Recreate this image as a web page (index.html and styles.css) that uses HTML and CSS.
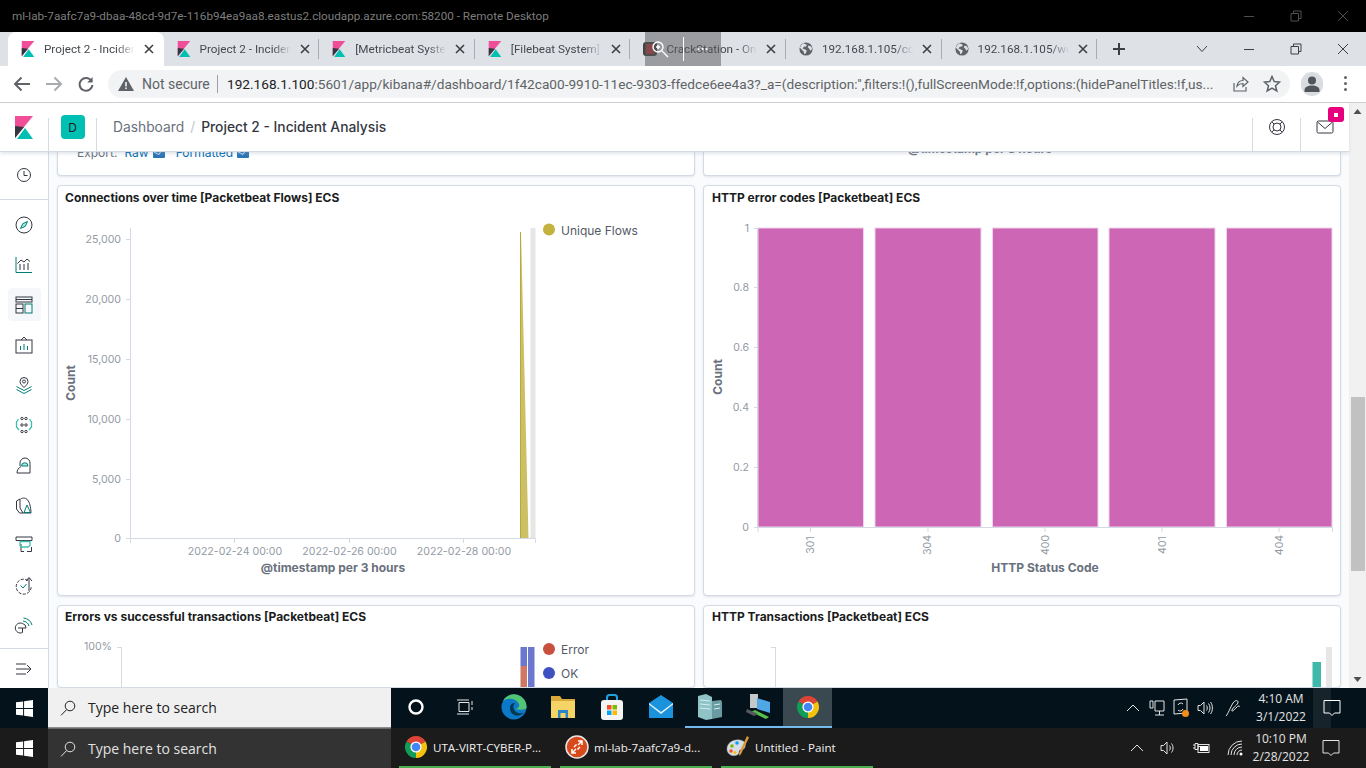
FILE: index.html
```html
<!DOCTYPE html>
<html lang="en">
<head>
<meta charset="utf-8">
<title>Project 2 - Incident Analysis</title>
<link rel="stylesheet" href="styles.css">
</head>
<body>
<svg class="defs" width="0" height="0" aria-hidden="true">
  <symbol id="kib" viewBox="0 0 18 23">
    <polygon class="k-pink" points="0,0 18,0 0,22"/>
    <polygon class="k-dark" points="0,10 9,11 0,22"/>
    <polygon class="k-teal" points="2,23 18,23 10,12"/>
  </symbol>
  <symbol id="globe" viewBox="0 0 16 16">
    <circle class="g-bg" cx="8" cy="8" r="7.5"/>
    <path class="g-land" d="M5 1.5 9 3 8 5 5.5 5.5 4 7.5 7 8.5 9 10 7.5 13 6 14 5.5 11 2.5 8 1 6.5 2.5 3.5zM11 4l3 1 1 3-2 2-1.5-2.5L10 6z"/>
  </symbol>
  <symbol id="chrome" viewBox="0 0 24 24">
    <path class="c-red" d="M12 12 2.47 6.5A11 11 0 0 1 21.53 6.5z"/>
    <path class="c-yel" d="M12 12 21.53 6.5A11 11 0 0 1 12 23z"/>
    <path class="c-grn" d="M12 12 12 23A11 11 0 0 1 2.47 6.5z"/>
    <circle class="c-wht" cx="12" cy="12" r="5.6"/>
    <circle class="c-blu" cx="12" cy="12" r="4.3"/>
  </symbol>
  <symbol id="win" viewBox="0 0 16 16">
    <path class="w-fill" d="M0 2.2 6.7 1.3V7.6H0zM7.6 1.2 16 0V7.6H7.6zM0 8.4H6.7V14.7L0 13.8zM7.6 8.4H16V16L7.6 14.8z"/>
  </symbol>
  <symbol id="mag" viewBox="0 0 16 16">
    <circle class="ln" cx="10" cy="6" r="4.8"/>
    <path class="ln" d="M6.6 9.6 1 15.4"/>
  </symbol>
  <symbol id="notif" viewBox="0 0 18 18">
    <path class="ln" d="M1 1.5H17V14H11.5L9 16.5 6.5 14H1z"/>
  </symbol>
  <symbol id="up" viewBox="0 0 14 8">
    <path class="ln" d="M1 7 7 1l6 6"/>
  </symbol>
  <symbol id="dl" viewBox="0 0 12 9">
    <rect class="dlic" width="12" height="9" rx="1"/>
    <path class="dlnotch" d="M1 3 6 5.500 8 2"/>
  </symbol>
</svg>

<div class="screen">
  <header class="rdp">
    <span class="rdp-title">ml-lab-7aafc7a9-dbaa-48cd-9d7e-116b94ea9aa8.eastus2.cloudapp.azure.com:58200 - Remote Desktop</span>
    <div class="winctl winctl-dim">
      <svg width="12" height="12" viewBox="0 0 12 12"><path class="ln" d="M1 6.5H11"/></svg>
      <svg width="12" height="12" viewBox="0 0 12 12"><path class="ln" d="M1 3.5H8.5V11H1zM3.5 3.5V1H11V8.5H8.5"/></svg>
      <svg width="12" height="12" viewBox="0 0 12 12"><path class="ln" d="M1 1 11 11M11 1 1 11"/></svg>
    </div>
  </header>

  <div class="tabstrip">
    <div class="tab tab-active">
      <svg class="fav" width="14" height="16"><use href="#kib"/></svg>
      <span class="tab-text">Project 2 - Incident Analysis</span>
      <svg class="tab-x" width="10" height="10" viewBox="0 0 10 10"><path d="M1 1 9 9M9 1 1 9"/></svg>
    </div>
    <div class="tab">
      <svg class="fav" width="14" height="16"><use href="#kib"/></svg>
      <span class="tab-text">Project 2 - Incident Analysis</span>
      <svg class="tab-x" width="10" height="10" viewBox="0 0 10 10"><path d="M1 1 9 9M9 1 1 9"/></svg>
    </div>
    <div class="tab">
      <svg class="fav" width="14" height="16"><use href="#kib"/></svg>
      <span class="tab-text">[Metricbeat System] Overview</span>
      <svg class="tab-x" width="10" height="10" viewBox="0 0 10 10"><path d="M1 1 9 9M9 1 1 9"/></svg>
    </div>
    <div class="tab">
      <svg class="fav" width="14" height="16"><use href="#kib"/></svg>
      <span class="tab-text">[Filebeat System] Syslog</span>
      <svg class="tab-x" width="10" height="10" viewBox="0 0 10 10"><path d="M1 1 9 9M9 1 1 9"/></svg>
    </div>
    <div class="tab">
      <svg class="fav" width="14" height="16" viewBox="0 0 14 16"><rect class="cs-bg" x="0" y="1" width="14" height="14" rx="3"/><rect class="cs-red" x="3" y="3" width="8" height="10"/></svg>
      <span class="tab-text">CrackStation - Online Password</span>
      <svg class="tab-x" width="10" height="10" viewBox="0 0 10 10"><path d="M1 1 9 9M9 1 1 9"/></svg>
    </div>
    <div class="tab">
      <svg class="fav" width="14" height="16"><use href="#globe"/></svg>
      <span class="tab-text">192.168.1.105/company_folders</span>
      <svg class="tab-x" width="10" height="10" viewBox="0 0 10 10"><path d="M1 1 9 9M9 1 1 9"/></svg>
    </div>
    <div class="tab">
      <svg class="fav" width="14" height="16"><use href="#globe"/></svg>
      <span class="tab-text">192.168.1.105/webdav/shell</span>
      <svg class="tab-x" width="10" height="10" viewBox="0 0 10 10"><path d="M1 1 9 9M9 1 1 9"/></svg>
    </div>
    <svg class="newtab" width="14" height="14" viewBox="0 0 14 14"><path d="M7 1V13M1 7H13"/></svg>
    <div class="winctl">
      <svg width="12" height="12" viewBox="0 0 12 8"><path class="ln" d="M1 1 6 6.5 11 1"/></svg>
      <svg width="12" height="12" viewBox="0 0 12 12"><path class="ln" d="M1 6.5H11"/></svg>
      <svg width="12" height="12" viewBox="0 0 12 12"><path class="ln" d="M1 3.5H8.5V11H1zM3.5 3.5V1H11V8.5H8.5"/></svg>
      <svg width="12" height="12" viewBox="0 0 12 12"><path class="ln" d="M1 1 11 11M11 1 1 11"/></svg>
    </div>
    <div class="zoom-overlay">
      <svg width="18" height="18" viewBox="0 0 18 18"><circle class="zo" cx="7" cy="7" r="5"/><path class="zo" d="M5 7H9M7 5V9M11 11 17 17"/></svg>
      <i class="ibeam"></i>
      <span class="zdots">•••</span>
    </div>
  </div>

  <div class="toolbar">
    <svg class="nav" width="18" height="16" viewBox="0 0 18 16"><path d="M17 8H2M8.5 1.5 2 8l6.5 6.5"/></svg>
    <svg class="nav nav-off" width="18" height="16" viewBox="0 0 18 16"><path d="M1 8H16M9.5 1.5 16 8l-6.5 6.5"/></svg>
    <svg class="nav" width="16" height="16" viewBox="0 0 16 16"><path d="M13.6 5.2A6.4 6.4 0 1 0 14.4 9"/><path class="nav-fill" d="M14.6 1V6.4H9.2z"/></svg>
    <div class="omnibox">
      <svg class="warn" width="16" height="14" viewBox="0 0 16 14"><path d="M8 0 16 14H0z"/><rect class="warn-b" x="7.2" y="5" width="1.6" height="4.5"/><rect class="warn-b" x="7.2" y="10.5" width="1.6" height="1.6"/></svg>
      <span class="notsec">Not secure</span>
      <i class="omsep"></i>
      <span class="url"><b>192.168.1.100</b>:5601/app/kibana#/dashboard/1f42ca00-9910-11ec-9303-ffedce6ee4a3?_a=(description:'',filters:!(),fullScreenMode:!f,options:(hidePanelTitles:!f,us...</span>
      <svg class="om-ic" width="18" height="18" viewBox="0 0 18 18"><path d="M3 8V16H15V12M6 11C6.5 7.5 9 5.5 12 5.5V2.5L17 7l-5 4.5V8.5C9.5 8.5 7.5 9.3 6 11z"/></svg>
      <svg class="om-ic om-star" width="18" height="18" viewBox="0 0 18 18"><path d="M9 1.5 11.2 6.6 16.6 7.1 12.5 10.7 13.8 16 9 13.2 4.2 16 5.5 10.7 1.4 7.1 6.8 6.6z"/></svg>
    </div>
    <div class="avatar"><svg width="16" height="16" viewBox="0 0 16 16"><circle cx="8" cy="4.5" r="4"/><path d="M0.5 16V14C0.5 11 4 9.5 8 9.5S15.5 11 15.5 14V16z"/></svg></div>
    <div class="kebab"><i></i><i></i><i></i></div>
  </div>

  <div class="page">
    <div class="kbn">
      <div class="kbn-head">
        <div class="head-logo"><svg width="18" height="23"><use href="#kib"/></svg></div>
        <i class="hsep"></i>
        <div class="head-space"><span class="space-badge">D</span></div>
        <i class="hsep"></i>
        <nav class="crumbs"><span class="crumb-a">Dashboard</span><span class="crumb-s">/</span><span class="crumb-b">Project 2 - Incident Analysis</span></nav>
        <i class="hsep"></i>
        <div class="head-btn">
          <svg class="hic" width="18" height="18" viewBox="0 0 18 18"><circle cx="9" cy="9" r="7.5"/><circle cx="9" cy="9" r="4"/><path d="M3.8 3.8 6.2 6.2M14.2 3.8 11.8 6.2M3.8 14.2 6.2 11.8M14.2 14.2 11.8 11.8"/></svg>
        </div>
        <i class="hsep"></i>
        <div class="head-btn">
          <svg class="hic" width="18" height="14" viewBox="0 0 18 14"><rect x="1" y="1" width="16" height="12" rx="1.5"/><path d="M1.5 2 9 8.5 16.5 2"/></svg>
          <span class="pink-badge"><i></i></span>
        </div>
      </div>

      <div class="kbn-body">
        <aside class="side">
          <div class="side-top">
            <svg class="si" width="18" height="18" viewBox="0 0 18 18"><circle cx="9" cy="9" r="6.500"/><path d="M9 5V9.500H12.500"/></svg>
          </div>
          <div class="side-list">
            <div class="si-cell"><svg class="si" width="18" height="18" viewBox="0 0 18 18"><circle cx="9" cy="9" r="8"/><path class="st tf" d="M12.5 5.5 10.3 10.3 5.5 12.5 7.7 7.7z"/></svg></div>
            <div class="si-cell"><svg class="si" width="18" height="18" viewBox="0 0 18 18"><path class="st" d="M1 1V16.5H17"/><path d="M2.5 7.5 6 4 9 6 12 3 15 5.500M5 14V8M9 14V8M13 14V7"/></svg></div>
            <div class="si-cell si-active"><svg class="si" width="18" height="18" viewBox="0 0 18 18"><rect x="1" y="1" width="16" height="5"/><path d="M1 3.500H17"/><rect x="1" y="8" width="7" height="9"/><path d="M1 12.500H8"/><rect class="st" x="10" y="8" width="7" height="9"/></svg></div>
            <div class="si-cell"><svg class="si" width="18" height="18" viewBox="0 0 18 18"><rect x="1" y="4" width="16" height="13"/><path d="M6 4 9 1 12 4"/><path class="st" d="M5.500 14V10M9 14V8M12.500 14V10"/></svg></div>
            <div class="si-cell"><svg class="si" width="18" height="18" viewBox="0 0 18 18"><path d="M9 11.500C6.500 9 5 7.500 5 5.500A4 4 0 0 1 13 5.500C13 7.500 11.500 9 9 11.500z"/><circle cx="9" cy="5.500" r="1.500"/><path class="st" d="M1.500 10.500 6 13 9 14.500 12 13 16.500 10.500M1.500 13.500 9 17.500 16.500 13.500"/></svg></div>
            <div class="si-cell"><svg class="si" width="18" height="18" viewBox="0 0 18 18"><circle cx="7" cy="2.500" r="1.200"/><circle cx="11" cy="2.500" r="1.200"/><circle cx="7" cy="9" r="1.200"/><circle cx="11" cy="9" r="1.200"/><circle cx="7" cy="15.500" r="1.200"/><circle cx="11" cy="15.500" r="1.200"/><path class="st sb" d="M3.500 3 1.500 6V11L4 14M14.500 3 16.500 6V11L14 14"/></svg></div>
            <div class="si-cell"><svg class="si" width="18" height="18" viewBox="0 0 18 18"><path d="M5 10V7A5 5 0 0 1 15 7V17H2C2 14 3.500 12 6 10.500"/><path class="st tf" d="M6.500 10A3 3 0 0 1 13 10z"/></svg></div>
            <div class="si-cell"><svg class="si" width="18" height="18" viewBox="0 0 18 18"><path d="M1.500 5 5 3V12L8 17H4.500L1.500 13zM5.500 3C11 0 15.500 4 16 17H8"/><path class="st" d="M9 16.500 12 9 15.500 16.500z"/></svg></div>
            <div class="si-cell"><svg class="si" width="18" height="18" viewBox="0 0 18 18"><path d="M1 1H17V4.500H1zM12 15.500H16.500V11"/><path d="M6 8V15.500H9"/><path class="st sb" d="M5 5.500H15V9.500L13 11H7L5 9.500z"/></svg></div>
            <div class="si-cell"><svg class="si" width="18" height="18" viewBox="0 0 18 18"><path class="dash" d="M13 4.500A7.500 7.500 0 1 0 16.200 11"/><path d="M14 15V2M11 5 14 1.500 17 5"/><path class="st" d="M5.500 9.500 8 12 11.500 8"/></svg></div>
            <div class="si-cell"><svg class="si" width="18" height="18" viewBox="0 0 18 18"><path d="M7.500 7.500A5 5 0 1 0 7.500 16.500V12H11A4.500 4.500 0 0 0 7.500 7.500zM3 12H7.500"/><path class="st" d="M8 5A7 7 0 0 1 14 10M8.500 2A10 10 0 0 1 17 9"/></svg></div>
          </div>
          <div class="side-foot">
            <svg class="si" width="16" height="14" viewBox="0 0 16 14"><path d="M0 2H10M0 7H15M0 12H10M11 3 15 7 11 11"/></svg>
          </div>
        </aside>

        <main class="content">
          <section class="panel panel-clip">
            <p class="exportrow">Export: <a class="lnk">Raw <svg width="12" height="9"><use href="#dl"/></svg></a><a class="lnk">Formatted <svg width="12" height="9"><use href="#dl"/></svg></a></p>
          </section>
          <section class="panel panel-clip">
            <p class="clip-axis">@timestamp per 3 hours</p>
          </section>

          <section class="panel">
            <h2 class="ptitle">Connections over time [Packetbeat Flows] ECS</h2>
            <svg class="chart" width="636" height="385" viewBox="58 210 636 385">
              <rect class="band" x="530.500" y="228" width="5" height="310"/>
              <polygon class="spike" points="520,232 521,232 528.500,538 520,538"/>
              <path class="spike-edge" d="M520.500 232V538"/>
              <path class="axis" d="M130.500 228V538.500H535.500M126 239.500H130M126 299.500H130M126 359.500H130M126 419.500H130M126 479.500H130M126 538.500H130M130.500 538.500V543M234.500 538.500V543M349.500 538.500V543M463.500 538.500V543M535.500 538.500V543"/>
              <g class="ticks tick-end">
                <text x="121" y="243">25,000</text><text x="121" y="303">20,000</text><text x="121" y="363">15,000</text><text x="121" y="423">10,000</text><text x="121" y="483">5,000</text><text x="121" y="542">0</text>
              </g>
              <g class="ticks tick-mid">
                <text x="235" y="555">2022-02-24 00:00</text><text x="349.500" y="555">2022-02-26 00:00</text><text x="464" y="555">2022-02-28 00:00</text>
              </g>
              <text class="axt" x="333" y="572">@timestamp per 3 hours</text>
              <text class="axt" transform="translate(75 383) rotate(-90)">Count</text>
              <circle class="dot-gold" cx="549" cy="229.500" r="6"/>
              <text class="legend" x="561" y="234.500">Unique Flows</text>
            </svg>
          </section>

          <section class="panel">
            <h2 class="ptitle">HTTP error codes [Packetbeat] ECS</h2>
            <svg class="chart" width="636" height="385" viewBox="704 210 636 385">
              <rect class="bar" x="758" y="228" width="105.500" height="299"/>
              <rect class="bar" x="875" y="228" width="106" height="299"/>
              <rect class="bar" x="992.500" y="228" width="105.500" height="299"/>
              <rect class="bar" x="1109" y="228" width="106" height="299"/>
              <rect class="bar" x="1226.500" y="228" width="105.500" height="299"/>
              <path class="axis" d="M757.500 228V527.500H1332.500M754 228.500H758M754 287.500H758M754 347.500H758M754 407.500H758M754 467.500H758M754 527.500H758M758 527.500V532M810.500 527.500V532M928 527.500V532M1045 527.500V532M1162 527.500V532M1279 527.500V532M1332.500 527.500V532"/>
              <g class="ticks tick-end">
                <text x="749" y="232">1</text><text x="749" y="291">0.8</text><text x="749" y="351">0.6</text><text x="749" y="411">0.4</text><text x="749" y="471">0.2</text><text x="749" y="531">0</text>
              </g>
              <g class="ticks tick-mid">
                <text transform="translate(814 545) rotate(-90)">301</text><text transform="translate(931 545) rotate(-90)">304</text><text transform="translate(1049 545) rotate(-90)">400</text><text transform="translate(1166 545) rotate(-90)">401</text><text transform="translate(1283 545) rotate(-90)">404</text>
              </g>
              <text class="axt" x="1045" y="572">HTTP Status Code</text>
              <text class="axt" transform="translate(722 377) rotate(-90)">Count</text>
            </svg>
          </section>

          <section class="panel">
            <h2 class="ptitle">Errors vs successful transactions [Packetbeat] ECS</h2>
            <svg class="chart" width="636" height="58" viewBox="58 630 636 58">
              <path class="axis" d="M121.500 647V688M117 647.500H121"/>
              <text class="ticktxt tick-end" x="112" y="650">100%</text>
              <rect class="b-blue" x="520.500" y="647" width="6.500" height="19"/>
              <rect class="b-red" x="520.500" y="666" width="6.500" height="22"/>
              <rect class="b-blue" x="528" y="647" width="6.500" height="41"/>
              <circle class="dot-red" cx="549" cy="649" r="6"/>
              <text class="legend" x="561" y="654">Error</text>
              <circle class="dot-blue" cx="549" cy="673" r="6"/>
              <text class="legend" x="561" y="678">OK</text>
            </svg>
          </section>

          <section class="panel">
            <h2 class="ptitle">HTTP Transactions [Packetbeat] ECS</h2>
            <svg class="chart" width="636" height="58" viewBox="704 630 636 58">
              <path class="axis" d="M775.500 647V688M771 647.500H775"/>
              <rect class="band" x="1326" y="647" width="6" height="41"/>
              <rect class="b-teal" x="1312.500" y="662" width="8.500" height="26"/>
            </svg>
          </section>
        </main>
      </div>
    </div>

    <div class="vscroll">
      <svg class="sarrow" width="17" height="17" viewBox="0 0 17 17"><path d="M4.500 11 8.500 6 12.500 11z"/></svg>
      <div class="sthumb"></div>
      <svg class="sarrow sarrow-end" width="17" height="17" viewBox="0 0 17 17"><path d="M4.500 6 8.500 11 12.500 6z"/></svg>
    </div>
  </div>

  <div class="tb tb-up">
    <div class="tb-start"><svg width="17" height="17"><use href="#win"/></svg></div>
    <div class="tb-search tb-search-light"><svg class="mag" width="16" height="16"><use href="#mag"/></svg><span>Type here to search</span></div>
    <div class="ti"><svg width="16" height="16" viewBox="0 0 16 16"><circle class="cort" cx="8" cy="8" r="6.500"/></svg></div>
    <div class="ti"><svg width="18" height="16" viewBox="0 0 18 16"><path class="ln" d="M3 3.500H13V12.500H3zM1 1H13M1 15H13"/><path class="ln" d="M16 2V6M16 8V11"/></svg></div>
    <div class="ti"><svg width="26" height="26" viewBox="0 0 26 26"><circle class="e-blue" cx="13" cy="13" r="12.500"/><path class="e-green" d="M25.500 14A12.500 12.500 0 0 0 2 7C6 3.500 15 3.500 18 10 19 13 16 15 14 15 19 16 25 16 25.500 14z"/><path class="e-dark" d="M9 14C9 10 12 8.500 14.500 9 12 10 11.500 14 14 17 16 19.500 20 20 23 18.500 19 23 13 22 10.500 19 9.500 17.500 9 16 9 14z"/></svg></div>
    <div class="ti"><svg width="26" height="24" viewBox="0 0 26 24"><path class="f-dk" d="M1 1H10L12 4H25V23H1z"/><rect class="f-lt" x="1" y="6" width="24" height="17"/><path class="f-blue" d="M8 23V15H18V23H15.500V18H10.500V23z"/></svg></div>
    <div class="ti"><svg width="24" height="26" viewBox="0 0 24 26"><path class="st-handle" d="M7 8V3.500C7 2 8 1 9.500 1H14.500C16 1 17 2 17 3.500V8"/><rect class="st-bag" x="1" y="6" width="22" height="20" rx="3"/><rect class="ms1" x="7" y="11" width="4.500" height="4.500"/><rect class="ms2" x="12.500" y="11" width="4.500" height="4.500"/><rect class="ms3" x="7" y="16.500" width="4.500" height="4.500"/><rect class="ms4" x="12.500" y="16.500" width="4.500" height="4.500"/></svg></div>
    <div class="ti"><svg width="26" height="24" viewBox="0 0 26 24"><path class="m-back" d="M1 8 13 0 25 8V23H1z"/><path class="m-flap" d="M1 8 13 17 25 8V9.500L13 19 1 9.500z"/></svg></div>
    <div class="ti ti-run"><svg width="26" height="26" viewBox="0 0 26 26"><path class="srv1" d="M1 2 9 0 15 3V25L9 26 1 23z"/><path class="srv2" d="M15 7 24 6 25 8V23L15 25z"/><path class="srv3" d="M3 6 13 7M3 10 13 11M3 14 13 15M17 11 23 10M17 15 23 14"/></svg></div>
    <div class="ti ti-run"><svg width="26" height="26" viewBox="0 0 26 26"><path class="pc1" d="M4 0H12V14H4z"/><path class="pc2" d="M11 4 24 8V19L11 15z"/><path class="pc3" d="M5 18 20 25 23 23 9 16z"/><path class="pc4" d="M1 15 12 20 8 22 0 18z"/></svg></div>
    <div class="ti ti-run ti-active"><svg width="24" height="24"><use href="#chrome"/></svg></div>
    <div class="tray">
      <div class="tc w24"><svg width="14" height="8"><use href="#up"/></svg></div>
      <div class="tc w24"><svg width="16" height="16" viewBox="0 0 16 16"><path class="ln" d="M6 1H15V11H6zM1 1H4V8H1zM10.500 11V15M6 15H15"/></svg></div>
      <div class="tc w24"><svg width="18" height="20" viewBox="0 0 18 20"><path class="ln" d="M2 2 15 1V15L2 16zM6 7A3 3 0 0 1 11 6M11 11A3 3 0 0 1 6 12"/><circle class="orange" cx="13.500" cy="15.500" r="3.500"/></svg></div>
      <div class="tc w24"><svg width="16" height="16" viewBox="0 0 16 16"><path class="ln" d="M1 5.500H3.500L7 2V14L3.500 10.500H1zM9.500 5.500C10.500 7 10.500 9 9.500 10.500M11.500 3.500C13.500 6 13.500 10 11.500 12.500M13.500 2C16 5 16 11 13.500 14"/></svg></div>
      <div class="tc w32"><svg width="16" height="18" viewBox="0 0 16 18"><path class="ln" d="M1 17C3 15 5 9 8 4 10 1 13 1 13 3 13 6 8 8 7 11 6 14 10 10 12 8 13 7 15 6 14 8"/></svg></div>
      <div class="clock c64"><span>4:10 AM</span><span>3/1/2022</span></div>
      <div class="tc w38 notif-up"><svg width="18" height="18"><use href="#notif"/></svg></div>
    </div>
  </div>

  <div class="tb tb-down">
    <div class="tb-start"><svg width="17" height="17"><use href="#win"/></svg></div>
    <div class="tb-search tb-search-dark"><svg class="mag" width="16" height="16"><use href="#mag"/></svg><span>Type here to search</span></div>
    <div class="task"><svg width="24" height="24"><use href="#chrome"/></svg><span>UTA-VIRT-CYBER-P...</span></div>
    <div class="task"><svg width="24" height="24" viewBox="0 0 24 24"><circle class="rdp-o" cx="12" cy="12" r="11"/><path class="rdp-a" d="M13 6 17 6 17 10M17 6 13 10M11 18 7 18 7 14M7 18 11 14M11.500 9.500 9 12M15 12 12.500 14.500"/></svg><span>ml-lab-7aafc7a9-d...</span></div>
    <div class="task"><svg width="24" height="24" viewBox="0 0 24 24"><path class="pal" d="M1 14C1 8 7 4 14 5 19 6 20 9 19 12 18 15 16 14 14 15 12 16 14 19 11 20 6 22 1 19 1 14z"/><circle class="ms2" cx="6" cy="11" r="1.800"/><circle class="ms3" cx="11" cy="8" r="1.800"/><circle class="ms1" cx="5" cy="16" r="1.800"/><circle class="ms4" cx="9" cy="17.500" r="1.500"/><path class="brush" d="M21 1 23 2.500 15 19 13.500 21 13 18z"/></svg><span>Untitled - Paint</span></div>
    <div class="tray">
      <div class="tc w32"><svg width="14" height="8"><use href="#up"/></svg></div>
      <div class="tc w30"><svg width="16" height="16" viewBox="0 0 16 16"><path class="ln" d="M1 5.500H3.500L7 2V14L3.500 10.500H1zM9.500 5.500C10.500 7 10.500 9 9.500 10.500M11.500 3.500C13.500 6 13.500 10 11.500 12.500"/></svg></div>
      <div class="tc w36"><svg width="18" height="14" viewBox="0 0 18 14"><path class="ln" d="M1 4H3M1 7H3M3 2.500V8.500H6V2.500zM6 5.500H8"/><rect class="ln" x="6" y="3.500" width="11" height="8"/><rect class="w-fill" x="8" y="5" width="8" height="5"/></svg></div>
      <div class="tc w32"><svg width="16" height="16" viewBox="0 0 16 16"><path class="ln" d="M1 15A14 14 0 0 1 15 1M4 15A11 11 0 0 1 15 4M7 15A8 8 0 0 1 15 7M10 15A5 5 0 0 1 15 10"/><circle class="w-fill" cx="14" cy="14" r="1.500"/></svg></div>
      <div class="clock c60"><span>10:10 PM</span><span>2/28/2022</span></div>
      <div class="tc w40"><svg width="18" height="18"><use href="#notif"/></svg></div>
    </div>
  </div>
</div>
</body>
</html>
```

FILE: styles.css
```css
* { box-sizing: border-box; }
html, body { margin: 0; padding: 0; width: 1366px; height: 768px; overflow: hidden; background: #000; }
body { font-family: Roboto, "Liberation Sans", sans-serif; }
.defs { position: absolute; }
svg { display: block; flex: none; }
.ln { fill: none; stroke: currentColor; stroke-width: 1; }
.screen { width: 1366px; height: 768px; display: flex; flex-direction: column; overflow: hidden; }

/* remote desktop bar */
.rdp { height: 32px; flex: none; background: #000; display: flex; align-items: center; padding-left: 12px; color: #7d7d7d; font-size: 11.7px; position: relative; }
.rdp-title { white-space: nowrap; }
.winctl { margin-left: auto; display: flex; align-items: center; }
.winctl-dim { color: #4e4e4e; gap: 35px; padding-right: 17px; }

/* tab strip */
.tabstrip { height: 34px; flex: none; background: #dee1e6; display: flex; align-items: center; padding-left: 8px; position: relative; color: #3c4043; }
.tabstrip .winctl { gap: 35px; padding-right: 17px; }
.tab { width: 155.6px; height: 34px; display: flex; align-items: center; padding-left: 13px; position: relative; }
.tab::after { content: ""; position: absolute; right: 0; top: 7px; width: 1px; height: 20px; background: #a9adb3; }
.tab-active { background: #fff; border-radius: 8px 8px 0 0; }
.tab-active::after { content: none; }
.fav { margin-right: 9px; }
.tab-text { width: 91px; white-space: nowrap; overflow: hidden; font-size: 11.7px; color: #45494e; -webkit-mask-image: linear-gradient(90deg, #000 80%, transparent 100%); mask-image: linear-gradient(90deg, #000 80%, transparent 100%); }
.tab-x { position: absolute; left: 136px; top: 12px; fill: none; stroke: #3c4043; stroke-width: 1.6; }
.newtab { margin-left: 15px; fill: none; stroke: #3c4043; stroke-width: 2; }
.k-pink { fill: #f04e98; }
.k-dark { fill: #343741; }
.k-teal { fill: #00bfb3; }
.g-bg { fill: #5f6368; }
.g-land { fill: #dee1e6; }
.cs-bg { fill: #444; }
.cs-red { fill: #b33a3a; }
.zoom-overlay { position: absolute; left: 645px; top: 0; width: 76px; height: 34px; background: rgba(88, 88, 88, 0.5); display: flex; align-items: center; padding-left: 6px; color: #fff; }
.zo { fill: none; stroke: #fff; stroke-width: 1.4; }
.ibeam { width: 1px; height: 24px; background: #fff; margin-left: 14px; }
.zdots { font-size: 9px; letter-spacing: 1px; margin-left: 13px; }

/* toolbar */
.toolbar { height: 37px; flex: none; background: #fff; border-bottom: 1px solid #ccced1; display: flex; align-items: center; padding: 0 0 1px 13px; }
.nav { fill: none; stroke: #5f6368; stroke-width: 2; margin-right: 14px; }
.nav:nth-child(3) { margin-right: 0; margin-left: 1px; }
.nav-off { stroke: #a7abb0; }
.nav-fill { fill: #5f6368; stroke: none; }
.omnibox { margin-left: 14px; width: 1182px; height: 28px; border-radius: 14px; background: #f1f3f4; display: flex; align-items: center; padding-left: 10px; }
.warn { fill: #5f6368; margin-right: 8px; }
.warn-b { fill: #f1f3f4; }
.notsec { font-size: 14px; color: #5f6368; white-space: nowrap; width: 67px; }
.omsep { width: 1px; height: 18px; background: #9aa0a6; margin: 0 9px 0 8px; flex: none; }
.url { font-size: 13.65px; color: #5f6368; white-space: nowrap; width: 991px; overflow: hidden; }
.url b { font-weight: 400; color: #202124; }
.om-ic { margin-left: 13px; fill: none; stroke: #5f6368; stroke-width: 1.2; }
.om-star { margin-left: 14px; stroke-width: 1.5; }
.avatar { width: 22px; height: 24px; margin-left: 11px; border-radius: 11px; background: #d9dce1; display: flex; align-items: center; justify-content: center; fill: #50555c; }
.kebab { margin-left: 21px; display: flex; flex-direction: column; gap: 3px; }
.kebab i { width: 3px; height: 3px; border-radius: 50%; background: #5f6368; }

/* kibana page */
.page { flex: 1; min-height: 0; display: flex; background: #fafbfd; }
.kbn { flex: 1; min-width: 0; display: flex; flex-direction: column; position: relative; }
.kbn-head { height: 49px; flex: none; background: #fff; border-bottom: 1px solid #d3dae6; box-shadow: 0 2px 3px rgba(152, 162, 179, .25); display: flex; position: relative; z-index: 2; padding-right: 1px; font-family: Inter, "Liberation Sans", sans-serif; }
.head-logo { width: 48px; display: flex; align-items: center; padding-left: 15px; }
.hsep { width: 1px; height: 33px; align-self: flex-end; background: #d3dae6; flex: none; }
.head-space { width: 47px; display: flex; align-items: center; justify-content: center; }
.space-badge { width: 24px; height: 24px; border-radius: 4px; background: #00bfb3; color: #1a1c21; font-size: 12px; display: flex; align-items: center; justify-content: center; }
.crumbs { flex: 1; display: flex; align-items: center; padding-left: 16px; font-size: 13.8px; }
.crumb-a { color: #69707d; }
.crumb-s { color: #c2c7cf; margin: 0 6px; }
.crumb-b { color: #343741; font-weight: 500; }
.head-btn { width: 47px; display: flex; align-items: center; justify-content: center; position: relative; }
.hic { fill: none; stroke: #343741; stroke-width: 1; }
.pink-badge { position: absolute; left: 27px; top: 4px; width: 16px; height: 15px; border-radius: 3px; background: #e6007e; display: flex; align-items: center; justify-content: center; }
.pink-badge i { width: 4px; height: 4px; background: #fff; }

.kbn-body { flex: 1; min-height: 0; display: flex; }
.side { width: 49px; flex: none; background: #fff; border-right: 1px solid #d3dae6; display: flex; flex-direction: column; }
.side-top { height: 48px; flex: none; border-bottom: 1px solid #d3dae6; display: flex; align-items: center; justify-content: center; padding-bottom: 2px; }
.side-list { flex: 1; min-height: 0; padding-top: 5px; display: flex; flex-direction: column; align-items: center; }
.si-cell { width: 33px; height: 40px; flex: none; display: flex; align-items: center; justify-content: center; }
.si-active { background: #f5f7fa; border-radius: 4px; height: 33px; margin: 3px 0 4px; }
.side-foot { height: 40px; flex: none; border-top: 1px solid #d3dae6; display: flex; align-items: center; justify-content: center; }
.si { fill: none; stroke: #343741; stroke-width: 1; overflow: visible; }
.si .st { stroke: #017d73; }
.si .tf { fill: rgba(0, 191, 179, .35); stroke: #017d73; }
.si .sb { stroke: #3ebeb0; stroke-width: 1.3; }
.si .dash { stroke-dasharray: 3 1.500; }

.content { flex: 1; min-width: 0; overflow: hidden; padding: 0 0 0 8px; display: grid; grid-template-columns: 638px 638px; grid-template-rows: 24px 411px 1fr; column-gap: 8px; row-gap: 9px; font-family: Inter, "Liberation Sans", sans-serif; }
.panel { background: #fff; border: 1px solid #d3dae6; border-radius: 4px; box-shadow: 0 1px 2px rgba(152, 162, 179, .25); overflow: hidden; min-height: 0; }
.panel-clip { border-top: 0; border-radius: 0 0 4px 4px; }
.exportrow { margin: -7px 0 0 19px; font-size: 12px; line-height: 16px; color: #69707d; white-space: nowrap; display: flex; gap: 7px; }
.lnk { color: #006bb4; display: inline-flex; align-items: center; gap: 4px; margin-right: 4px; }
.dlic { fill: #2a75b8; }
.dlnotch { fill: none; stroke: #fff; stroke-width: .8; }
.clip-axis { margin: -11px 0 0; padding-right: 84px; text-align: center; font-size: 12px; font-weight: 700; line-height: 16px; color: #69707d; }
.ptitle { margin: 0; height: 24px; padding: 4px 8px; font-size: 12px; line-height: 16px; font-weight: 700; color: #1a1c21; white-space: nowrap; }
.panel:nth-child(odd) .ptitle { padding-left: 7px; }
.panel:nth-child(n+5) .ptitle { padding-top: 3px; }
.chart { overflow: hidden; }
.axis { fill: none; stroke: #d3dae6; stroke-width: 1; }
.band { fill: #e6e6e6; }
.spike { fill: #cdbf63; }
.spike-edge { stroke: #b9a93c; stroke-width: 1; }
.ticks text, .ticktxt { font-size: 10.6px; fill: #939aa5; }
.tick-end text, .ticktxt.tick-end { text-anchor: end; }
.tick-mid text { text-anchor: middle; }
.axt { font-size: 12px; font-weight: 700; fill: #69707d; text-anchor: middle; }
.legend { font-size: 12px; fill: #535966; }
.dot-gold { fill: #c4b13e; }
.dot-red { fill: #c9503c; }
.dot-blue { fill: #3f51c0; }
.bar { fill: #cc66b5; stroke: #f0d3ea; stroke-width: 1; }
.b-blue { fill: #6b78ce; }
.b-red { fill: #d17766; }
.b-teal { fill: #3fb9ab; }

.vscroll { width: 17px; flex: none; background: #f1f1f1; display: flex; flex-direction: column; align-items: center; }
.sarrow { fill: #505050; }
.sthumb { width: 14px; height: 174px; margin-top: 277px; background: #c1c1c1; }
.sarrow-end { margin-top: auto; }

/* task bars */
.tb { height: 40px; flex: none; display: flex; align-items: stretch; color: #fff; font-family: "Open Sans", "Liberation Sans", sans-serif; }
.tb-up { background: #04131b; }
.tb-down { background: #1b1b1b; }
.tb-start { width: 48px; display: flex; align-items: center; justify-content: center; color: #fff; }
.w-fill { fill: #fff; }
.tb-search { width: 343px; display: flex; align-items: center; padding-left: 12px; font-size: 14px; gap: 12px; }
.tb-search-light { background: #f0f0f0; color: #222; border-bottom: 1px solid #8d8d8d; }
.tb-search-dark { background: #333; color: #e2e2e2; border-top: 1px solid #6a6a6a; }
.mag { color: inherit; }
.ti { width: 49px; display: flex; align-items: center; justify-content: center; color: #e8e8e8; border-bottom: 2px solid transparent; }
.ti-run { border-bottom-color: #76b9ed; background-clip: padding-box; }
.ti-active { background-color: #3a4850; }
.cort { fill: none; stroke: #fff; stroke-width: 2.4; }
.e-blue { fill: #0c78c8; }
.e-green { fill: #52c474; }
.e-dark { fill: #06384f; }
.f-dk { fill: #d9a93a; }
.f-lt { fill: #f6d365; }
.f-blue { fill: #2a86c8; }
.st-handle { fill: none; stroke: #1fa0e0; stroke-width: 2; }
.st-bag { fill: #f4f4f4; }
.ms1 { fill: #f25022; }
.ms2 { fill: #7fba00; }
.ms3 { fill: #00a4ef; }
.ms4 { fill: #ffb900; }
.m-back { fill: #1b93dc; }
.m-flap { fill: #e6f4fb; }
.srv1 { fill: #8fc3c8; }
.srv2 { fill: #6a9aa2; }
.srv3 { fill: none; stroke: #d3eef0; stroke-width: 1; }
.pc1 { fill: #c5c8c8; }
.pc2 { fill: #4fa7e6; }
.pc3 { fill: #57c04b; }
.pc4 { fill: #55595b; }
.c-red { fill: #db4437; }
.c-yel { fill: #f4c20d; }
.c-grn { fill: #0f9d58; }
.c-wht { fill: #fff; }
.c-blu { fill: #4285f4; }
.tray { margin-left: auto; display: flex; align-items: center; padding-right: 15px; height: 100%; color: #e4e4e4; }
.tc { height: 100%; display: flex; align-items: center; justify-content: center; }
.w24 { width: 24px; }
.w30 { width: 30px; }
.w32 { width: 32px; }
.w36 { width: 36px; }
.w38 { width: 38px; }
.w40 { width: 40px; }
.notif-up { color: #fff; background: linear-gradient(90deg, #17232b 0, #17232b 18px, transparent 18px); }
.orange { fill: #f28c18; }
.clock { display: flex; flex-direction: column; align-items: center; gap: 2px; font-size: 12px; line-height: 16px; color: #e4e4e4; }
.c64 { width: 64px; }
.c60 { width: 60px; }
.task { width: 152px; margin-left: 8px; margin-right: 1px; display: flex; align-items: center; gap: 5px; padding-left: 5px; font-size: 11.6px; border-bottom: 2px solid #4caf50; white-space: nowrap; color: #f0f0f0; }
.rdp-o { fill: #d84a1b; stroke: #e8e8e8; stroke-width: 1.500; }
.rdp-a { fill: none; stroke: #fff; stroke-width: 1.500; }
.pal { fill: #d6dde6; stroke: #9aa7b5; stroke-width: .5; }
.brush { fill: #d99a3c; }
```
